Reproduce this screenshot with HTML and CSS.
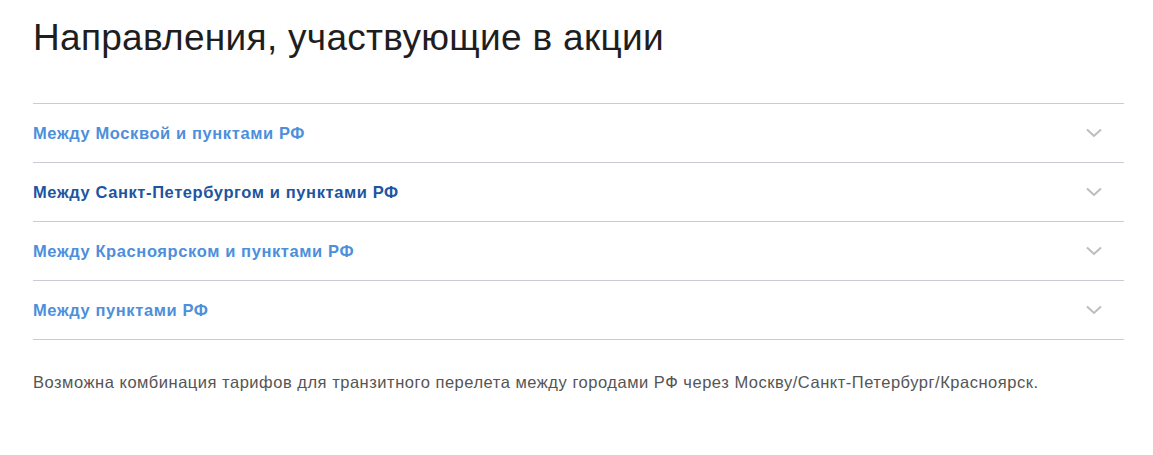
FILE: index.html
```html
<!DOCTYPE html>
<html lang="ru">
<head>
    <meta charset="UTF-8">
    <title>Направления, участвующие в акции</title>
    <link rel="stylesheet" href="styles.css">
</head>
<body>
    <div class="container">
        <h1>Направления, участвующие в акции</h1>

        <div class="routes">
            <div class="route">
                <span class="route-title">Между Москвой и пунктами РФ</span>
                <svg class="chevron" width="16" height="10" viewBox="0 0 16 10"><path d="M1 1.5l7 6.5 7-6.5"/></svg>
            </div>
            <div class="route active">
                <span class="route-title">Между Санкт-Петербургом и пунктами РФ</span>
                <svg class="chevron" width="16" height="10" viewBox="0 0 16 10"><path d="M1 1.5l7 6.5 7-6.5"/></svg>
            </div>
            <div class="route">
                <span class="route-title">Между Красноярском и пунктами РФ</span>
                <svg class="chevron" width="16" height="10" viewBox="0 0 16 10"><path d="M1 1.5l7 6.5 7-6.5"/></svg>
            </div>
            <div class="route">
                <span class="route-title">Между пунктами РФ</span>
                <svg class="chevron" width="16" height="10" viewBox="0 0 16 10"><path d="M1 1.5l7 6.5 7-6.5"/></svg>
            </div>
        </div>

        <p class="note">Возможна комбинация тарифов для транзитного перелета между городами РФ через Москву/Санкт-Петербург/Красноярск.</p>
    </div>
</body>
</html>
```

FILE: styles.css
```css
body {
    font-family: Arial, "Liberation Sans", "DejaVu Sans", sans-serif;
    margin: 0;
    background: #fff;
    color: #222;
}

.container {
    padding: 17px 29px 0 33px;
}

h1 {
    font-size: 37px;
    font-weight: normal;
    line-height: 41px;
    letter-spacing: 0.3px;
    margin: 0 0 45px;
    color: #1e1e1e;
}

.route {
    display: flex;
    align-items: center;
    justify-content: space-between;
    padding: 20px 22px 20px 0;
    border-top: 1px solid #c9ccd2;
    cursor: pointer;
}

.route:last-child {
    border-bottom: 1px solid #c9ccd2;
}

.route-title {
    font-size: 16.5px;
    font-weight: bold;
    line-height: 18px;
    letter-spacing: 0.6px;
    color: #4d8fdb;
}

.route.active .route-title {
    color: #1d55a0;
}

.chevron {
    fill: none;
    stroke: #bdbdbd;
    stroke-width: 2;
}

.note {
    margin: 33px 0 0;
    font-size: 16.5px;
    line-height: 18px;
    letter-spacing: 0.52px;
    color: #555;
}
```
